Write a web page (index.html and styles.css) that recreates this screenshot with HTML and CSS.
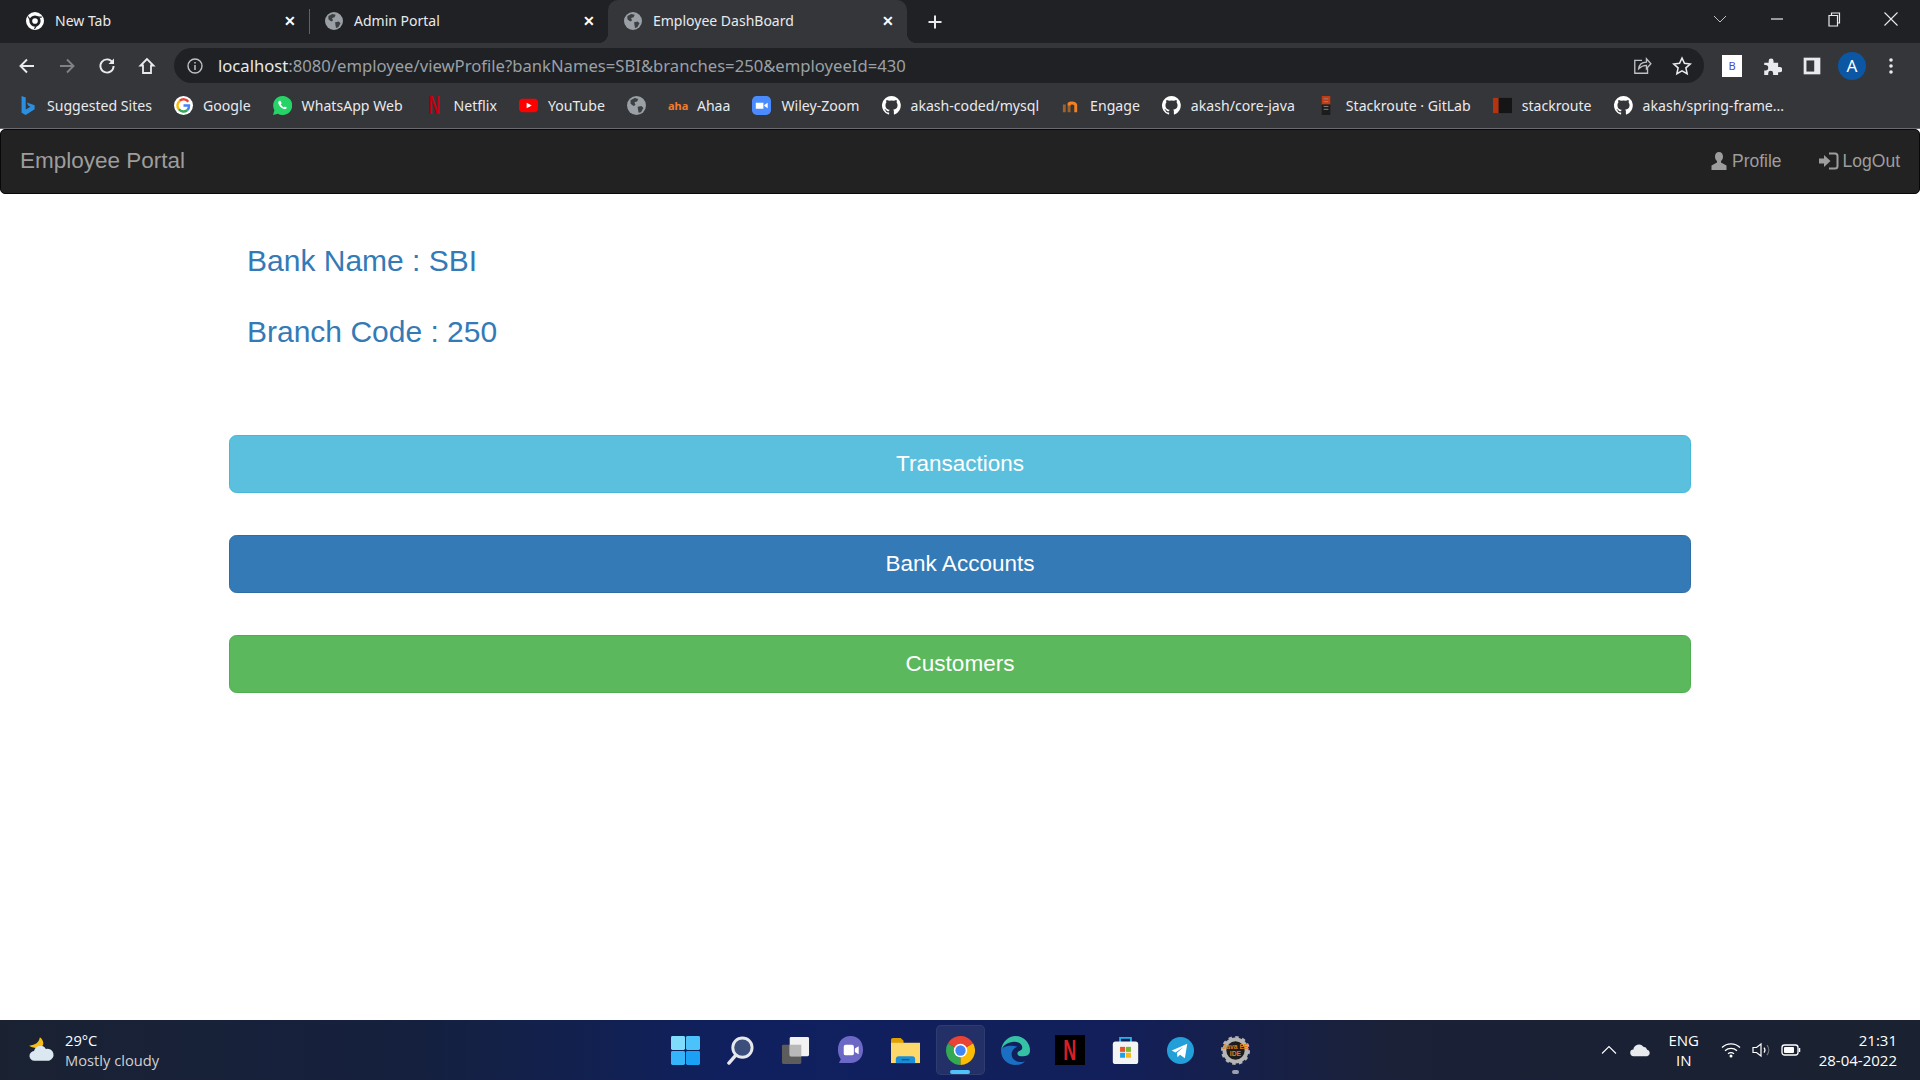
FILE: index.html
```html
<!DOCTYPE html>
<html lang="en">
<head>
    <meta charset="UTF-8">
    <meta name="viewport" content="width=device-width, initial-scale=1.0">
    <title>Employee DashBoard</title>
    <link rel="stylesheet" href="styles.css">
</head>
<body>
    <svg class="defs" width="0" height="0">
        <symbol id="globe" viewBox="0 0 16 16">
            <circle cx="8" cy="8" r="8" fill="#9aa0a6"/>
            <path d="M3 3.500l3.500-1.800 3 .8-1 2.200-2.200.6.8 2.200-1.600 1L3 6.500zM9 9l3.200-.6 1.600 1.600-2 3.600-2 .6-.6-3z" fill="#3c4043"/>
        </symbol>
        <symbol id="github" viewBox="0 0 16 16">
            <path fill="#fff" d="M8 0a8 8 0 0 0-2.500 15.600c.4.1.5-.2.5-.4v-1.400c-2.200.5-2.700-1-2.700-1-.4-.9-.9-1.200-.9-1.200-.7-.5.1-.5.1-.5.8.1 1.200.8 1.200.8.7 1.200 1.900.9 2.300.7.1-.5.300-.9.500-1.100-1.800-.2-3.600-.9-3.600-4 0-.9.300-1.600.8-2.100-.1-.2-.4-1 .1-2.100 0 0 .7-.2 2.200.8a7.600 7.600 0 0 1 4 0c1.500-1 2.200-.8 2.200-.8.4 1.100.2 1.900.1 2.100.5.600.8 1.300.8 2.100 0 3.100-1.900 3.700-3.700 3.900.3.300.6.800.6 1.500v2.200c0 .2.100.5.600.4A8 8 0 0 0 8 0z"/>
        </symbol>
    </svg>

    <div class="tabstrip">
        <div class="tab">
            <svg class="favicon" viewBox="0 0 16 16"><circle cx="8" cy="8" r="6.500" fill="none" stroke="#fff" stroke-width="3"/><circle cx="8" cy="8" r="2.500" fill="#fff"/><path d="M8 4.500h6M5 9.500L2 4M10.500 10l-3 5" stroke="#202124" stroke-width="1"/></svg>
            <span class="tab-title">New Tab</span>
            <span class="tab-close">&#10005;</span>
        </div>
        <div class="tab tab-sep">
            <svg class="favicon"><use href="#globe"/></svg>
            <span class="tab-title">Admin Portal</span>
            <span class="tab-close">&#10005;</span>
        </div>
        <div class="tab tab-active">
            <svg class="favicon"><use href="#globe"/></svg>
            <span class="tab-title">Employee DashBoard</span>
            <span class="tab-close">&#10005;</span>
        </div>
        <svg class="new-tab" viewBox="0 0 16 16"><path d="M8 1.500v13M1.500 8h13" stroke="#e8eaed" stroke-width="2"/></svg>
        <div class="window-controls">
            <svg class="win-btn" viewBox="0 0 16 16"><path d="M2 5l6 6 6-6" fill="none" stroke="#bdc1c6" stroke-width="1"/></svg>
            <svg class="win-btn" viewBox="0 0 16 16"><path d="M2 8h12" stroke="#e8eaed" stroke-width="1.200"/></svg>
            <svg class="win-btn" viewBox="0 0 16 16"><path d="M3 4.500h8.500V15H3zM5.500 4.500V2h8v10h-2" fill="none" stroke="#e8eaed" stroke-width="1.200"/></svg>
            <svg class="win-btn" viewBox="0 0 16 16"><path d="M1.500 1.500l13 13M14.500 1.500l-13 13" stroke="#e8eaed" stroke-width="1.100"/></svg>
        </div>
    </div>

    <div class="toolbar">
        <svg class="tool-btn" viewBox="0 0 18 18"><path d="M16 9H3M9 2.500L2.500 9 9 15.500" fill="none" stroke="#e8eaed" stroke-width="1.900"/></svg>
        <svg class="tool-btn" viewBox="0 0 18 18"><path d="M2 9h13M9 2.500L15.500 9 9 15.500" fill="none" stroke="#7f8286" stroke-width="1.900"/></svg>
        <svg class="tool-btn" viewBox="0 0 18 18"><path d="M14.600 5.500A6.600 6.600 0 1 0 15.600 9" fill="none" stroke="#e8eaed" stroke-width="1.900"/><path d="M16 1.500v5.500h-5.500z" fill="#e8eaed"/></svg>
        <svg class="tool-btn" viewBox="0 0 18 18"><path d="M9 2L2.500 8.500H5V16h8V8.500h2.500z" fill="none" stroke="#e8eaed" stroke-width="1.800"/></svg>
        <div class="omnibox">
            <svg class="omni-info" viewBox="0 0 16 16"><circle cx="8" cy="8" r="7" fill="none" stroke="#bdc1c6" stroke-width="1.400"/><path d="M8 7v5M8 4v1.600" stroke="#bdc1c6" stroke-width="1.500"/></svg>
            <span class="url"><span class="url-host">localhost</span>:8080/employee/viewProfile?bankNames=SBI&amp;branches=250&amp;employeeId=430</span>
            <svg class="omni-icon" viewBox="0 0 18 18"><path d="M9 4H2.500v11.500h11.500V11M6 11.500c.5-4 3-6 7-6V2.500l4 4.500-4 4.500V8.500c-3 0-5 1-7 3z" fill="none" stroke="#bdc1c6" stroke-width="1.200"/></svg>
            <svg class="omni-icon" viewBox="0 0 18 18"><path d="M9 1.800l2.200 4.800 5.200.6-3.900 3.500 1.100 5.200L9 13.300l-4.600 2.600 1.100-5.200L1.600 7.200l5.200-.6z" fill="none" stroke="#e8eaed" stroke-width="1.400"/></svg>
        </div>
        <div class="ext-icons">
            <span class="ext-b">B</span>
            <svg class="ext-icon" viewBox="0 0 18 18"><path d="M2 6h4V4.500a2.200 2.200 0 0 1 4.400 0V6h4.100v4H16a2.300 2.300 0 0 1 0 4.600h-1.500V17H10v-1.500a2.200 2.200 0 0 0-4.400 0V17H2v-4h1.200a2.400 2.400 0 0 0 0-4.800H2z" fill="#e8eaed"/></svg>
            <svg class="ext-icon" viewBox="0 0 18 18"><path d="M1.500 1.500h15v15h-15z" fill="#e8eaed"/><path d="M4 4h7v10H4z" fill="#35363a"/></svg>
            <span class="avatar">A</span>
            <svg class="ext-menu" viewBox="0 0 6 18"><circle cx="3" cy="3" r="1.800" fill="#e8eaed"/><circle cx="3" cy="9" r="1.800" fill="#e8eaed"/><circle cx="3" cy="15" r="1.800" fill="#e8eaed"/></svg>
        </div>
    </div>

    <div class="bookmarks">
        <a class="bookmark"><svg class="bm-icon" viewBox="0 0 16 16"><path d="M3 0l3.500 1.300v10l4-2.300-2-1-1-2.500 6.500 2.300v3.400L6.500 16 3 14z" fill="#2a8fe0"/></svg>Suggested Sites</a>
        <a class="bookmark"><svg class="bm-icon" viewBox="0 0 20 20"><circle cx="10" cy="10" r="10" fill="#fff"/><path d="M15 6a6 6 0 0 0-9-.8" fill="none" stroke="#ea4335" stroke-width="2.600"/><path d="M6 5.200A6 6 0 0 0 5.200 14" fill="none" stroke="#fbbc05" stroke-width="2.600"/><path d="M5.200 14a6 6 0 0 0 8.600 1" fill="none" stroke="#34a853" stroke-width="2.600"/><path d="M13.800 15a6 6 0 0 0 2-5H10" fill="none" stroke="#4285f4" stroke-width="2.600"/></svg>Google</a>
        <a class="bookmark"><svg class="bm-icon" viewBox="0 0 20 20"><path d="M10 0a10 10 0 0 0-8.500 15L0 20l5.200-1.400A10 10 0 1 0 10 0z" fill="#25d366"/><path d="M6.500 5c-1 .8-1.200 2.200-.5 3.800 1.200 2.600 3 4.200 5.500 5 1.500.4 2.700-.2 3.200-1.400l-2.200-1.400-1.200 1C10 11.500 8.800 10.200 8.200 8.800l1-1.100L7.800 5z" fill="#fff"/></svg>WhatsApp Web</a>
        <a class="bookmark"><span class="bm-netflix"><span class="narrow-n">N</span></span>Netflix</a>
        <a class="bookmark"><svg class="bm-icon" viewBox="0 0 20 20"><rect y="3" width="20" height="14" rx="4" fill="#f00"/><path d="M8 7l5.500 3L8 13z" fill="#fff"/></svg>YouTube</a>
        <a class="bookmark bookmark-bare"><svg class="bm-icon"><use href="#globe"/></svg></a>
        <a class="bookmark"><span class="bm-aha">aha</span>Ahaa</a>
        <a class="bookmark"><svg class="bm-icon" viewBox="0 0 20 20"><rect width="20" height="20" rx="5" fill="#4a8cff"/><path d="M4 7h8v6.500H4zM13 9.500l3.500-2.500v6L13 10.500z" fill="#fff"/></svg>Wiley-Zoom</a>
        <a class="bookmark"><svg class="bm-icon"><use href="#github"/></svg>akash-coded/mysql</a>
        <a class="bookmark"><svg class="bm-icon" viewBox="0 0 20 20"><path d="M2 9h3v8H2zM7 9h3v8H7z" fill="#a0622a"/><path d="M7 7c3-2 9-2 10 2v8h-3V10c-1-1.500-4-1-4 0H7z" fill="#f48120"/></svg>Engage</a>
        <a class="bookmark"><svg class="bm-icon"><use href="#github"/></svg>akash/core-java</a>
        <a class="bookmark"><svg class="bm-icon" viewBox="0 0 20 20"><path d="M5 0h9v9H5z" fill="#c23b12"/><path d="M5 9h9v11H5z" fill="#1c1c1c"/><path d="M7 3h5M7 6h5M7 11h5M7 14h5" stroke="#8a8a8a" stroke-width="1"/></svg>Stackroute · GitLab</a>
        <a class="bookmark"><svg class="bm-icon" viewBox="0 0 20 20"><path d="M0 2h6v16H0z" fill="#b5330f"/><path d="M6 2h14v16H6z" fill="#151515"/></svg>stackroute</a>
        <a class="bookmark"><svg class="bm-icon"><use href="#github"/></svg>akash/spring-frame...</a>
    </div>

    <nav class="navbar">
        <a class="navbar-brand">Employee Portal</a>
        <div class="navbar-right">
            <a class="nav-link">
                <svg class="nav-icon" viewBox="0 0 18 18"><path d="M9 0c2.500 0 4 2 4 4.500 0 2-.8 3.500-2 4.500v1.500l5.500 3V18h-15v-4.500l5.500-3V9C5.800 8 5 6.500 5 4.500 5 2 6.500 0 9 0z" fill="#9d9d9d"/></svg>Profile</a>
            <a class="nav-link">
                <svg class="nav-icon nav-icon-wide" viewBox="0 0 20 18"><path d="M0 6.500h5V3l6.500 6L5 15v-3.500H0z" fill="#9d9d9d"/><path d="M10 1.500h6a2.500 2.500 0 0 1 2.500 2.500v10a2.500 2.500 0 0 1-2.500 2.500h-6" fill="none" stroke="#9d9d9d" stroke-width="2"/></svg>LogOut</a>
        </div>
    </nav>

    <main class="container">
        <h3 class="info-line">Bank Name : SBI</h3>
        <h3 class="info-line">Branch Code : 250</h3>
        <div class="actions">
            <a class="btn btn-info">Transactions</a>
            <a class="btn btn-primary">Bank Accounts</a>
            <a class="btn btn-success">Customers</a>
        </div>
    </main>

    <footer class="taskbar">
        <div class="weather">
            <svg class="weather-icon" viewBox="0 0 28 28"><path d="M13 2c-1 5-4 7-10 8 3 2 7 3 11 1 3-1 3-6-1-9z" fill="#f6bd16"/><path d="M8 24a4.500 4.500 0 0 1-.5-9 6 6 0 0 1 11-2 5.500 5.500 0 0 1 3 11z" fill="#dbe8f2"/></svg>
            <div class="weather-text">
                <span class="weather-temp">29°C</span>
                <span class="weather-desc">Mostly cloudy</span>
            </div>
        </div>
        <div class="task-icons">
            <div class="task-item">
                <svg class="task-icon" viewBox="0 0 30 30"><rect x="0" y="0" width="14.500" height="14.500" rx="1.500" fill="#7fdcfb"/><rect x="15.500" y="0" width="14.500" height="14.500" rx="1.500" fill="#4cc2fa"/><rect x="0" y="15.500" width="14.500" height="14.500" rx="1.500" fill="#35b4f9"/><rect x="15.500" y="15.500" width="14.500" height="14.500" rx="1.500" fill="#1aa0f5"/></svg>
            </div>
            <div class="task-item">
                <svg class="task-icon" viewBox="0 0 30 30"><circle cx="17" cy="12" r="10" fill="#3c4f7c" stroke="#e6e8ec" stroke-width="3"/><path d="M10 20l-7 8" stroke="#e6e8ec" stroke-width="3.500" stroke-linecap="round"/></svg>
            </div>
            <div class="task-item">
                <svg class="task-icon" viewBox="0 0 30 30"><rect x="1" y="9" width="20" height="20" rx="1.500" fill="#5c5c5c"/><rect x="9" y="1" width="20" height="20" rx="1.500" fill="#f2f2f2"/><rect x="9" y="9" width="12" height="12" fill="#b8b8b8"/></svg>
            </div>
            <div class="task-item">
                <svg class="task-icon" viewBox="0 0 30 30"><path d="M15 0c8 0 13 6 13 14s-5 14-13 14H3l2-4C3 21 2 18 2 14 2 6 7 0 15 0z" fill="#6b68c6"/><rect x="8" y="9" width="10.500" height="11" rx="2" fill="#fff"/><path d="M19.500 13l4-2.500v8.500l-4-2.500z" fill="#fff"/></svg>
            </div>
            <div class="task-item">
                <svg class="task-icon" viewBox="0 0 30 30"><path d="M0 4a2 2 0 0 1 2-2h8l3 3v4H0z" fill="#e0a100"/><path d="M0 7h30v21H0z" fill="#fcd96a"/><path d="M5 24a3 3 0 0 1 3-3h14a3 3 0 0 1 3 3v4H5z" fill="#1a8fd8"/><path d="M11 24.500h8" stroke="#0c5c96" stroke-width="1.500"/></svg>
            </div>
            <div class="task-item task-item-active">
                <svg class="task-icon" viewBox="0 0 28 28"><circle cx="14" cy="14" r="9.500" fill="none" stroke="#34a853" stroke-width="9" pathLength="3" stroke-dasharray="1 2" transform="rotate(90 14 14)"/><circle cx="14" cy="14" r="9.500" fill="none" stroke="#fbbc05" stroke-width="9" pathLength="3" stroke-dasharray="1 2" transform="rotate(330 14 14)"/><circle cx="14" cy="14" r="9.500" fill="none" stroke="#ea4335" stroke-width="9" pathLength="3" stroke-dasharray="1 2" transform="rotate(210 14 14)"/><circle cx="14" cy="14" r="6.500" fill="#fff"/><circle cx="14" cy="14" r="5" fill="#4285f4"/></svg>
            </div>
            <div class="task-item">
                <svg class="task-icon" viewBox="0 0 30 30"><path d="M15 0a15 15 0 0 1 15 15c0 5-4 6-8 6-3 0-5-1-5-3 0-3 5-2 5-6 0-4-4-6-8-6-7 0-12 4-14 9C1 6 8 0 15 0z" fill="#35c1a5"/><path d="M0 15c0 9 7 15 15 15 4 0 7-1 10-4-9 3-14-2-14-7 0-4 3-7 6-8-7-2-17 0-17 4z" fill="#1a6fc2"/></svg>
            </div>
            <div class="task-item">
                <span class="task-netflix"><span class="narrow-n">N</span></span>
            </div>
            <div class="task-item">
                <svg class="task-icon" viewBox="0 0 30 32"><path d="M9 7V2h12v5" fill="none" stroke="#22b4ea" stroke-width="2"/><rect x="1" y="6" width="28" height="25" rx="3" fill="#f4f4f4"/><rect x="9" y="12" width="5.500" height="5.500" fill="#e8552b"/><rect x="15.500" y="12" width="5.500" height="5.500" fill="#7cb82f"/><rect x="9" y="18.500" width="5.500" height="5.500" fill="#1ea0e8"/><rect x="15.500" y="18.500" width="5.500" height="5.500" fill="#f7b916"/></svg>
            </div>
            <div class="task-item">
                <svg class="task-icon" viewBox="0 0 30 30"><circle cx="15" cy="15" r="14" fill="#229ed9"/><path d="M6 15l16-7-2.500 15-5-3.500-2.500 2.500-.8-4.500 7-6-8.500 5.500z" fill="#fff"/></svg>
            </div>
            <div class="task-item task-item-open">
                <svg class="task-icon" viewBox="0 0 30 30"><circle cx="15" cy="15" r="11.500" fill="#1c1c1c" stroke="#b5b5b5" stroke-width="4"/><circle cx="15" cy="15" r="13.500" fill="none" stroke="#b5b5b5" stroke-width="3" stroke-dasharray="3.500 3.500"/><text x="15" y="13" class="ee-text">Java EE</text><text x="15" y="21" class="ee-text">IDE</text></svg>
            </div>
        </div>
        <div class="tray">
            <svg class="tray-chevron" viewBox="0 0 16 10"><path d="M1 8.500l7-7 7 7" fill="none" stroke="#fff" stroke-width="1.100"/></svg>
            <svg class="tray-cloud" viewBox="0 0 22 14"><path d="M4 13.500a3.500 3.500 0 0 1-.5-7A6 6 0 0 1 14 3.500a4.500 4.500 0 0 1 4 3.200 3.500 3.500 0 0 1 0 6.800z" fill="#e8eaed"/></svg>
            <div class="tray-lang"><span>ENG</span><span>IN</span></div>
            <svg class="tray-icon tray-wifi" viewBox="0 0 20 16"><path d="M1 5.500a13 13 0 0 1 18 0M4 8.700a9 9 0 0 1 12 0M7 11.700a5 5 0 0 1 6 0" fill="none" stroke="#fff" stroke-width="1.300"/><circle cx="10" cy="14" r="1.500" fill="#fff"/></svg>
            <svg class="tray-icon" viewBox="0 0 20 16"><path d="M1 5.500h3.500L9 2v12l-4.500-3.500H1z" fill="none" stroke="#fff" stroke-width="1.200"/><path d="M12 5.500a4 4 0 0 1 0 5" fill="none" stroke="#fff" stroke-width="1.200"/><path d="M15 3a8 8 0 0 1 0 10" fill="none" stroke="#777" stroke-width="1.200"/></svg>
            <svg class="tray-icon" viewBox="0 0 20 16"><rect x="1" y="3" width="16" height="10" rx="2.500" fill="none" stroke="#fff" stroke-width="1.300"/><rect x="3" y="5" width="10" height="6" rx="1" fill="#fff"/><path d="M18.500 6v4" stroke="#fff" stroke-width="1.500"/></svg>
            <div class="tray-clock"><span>21:31</span><span>28-04-2022</span></div>
        </div>
    </footer>
</body>
</html>
```

FILE: styles.css
```css
* {
    box-sizing: border-box;
}
html, body {
    height: 100%;
}
body {
    margin: 0;
    height: 100vh;
    display: flex;
    flex-direction: column;
    overflow: hidden;
    background-color: #fff;
    font-family: "Liberation Sans", Arial, sans-serif;
}
.defs {
    position: absolute;
}

/* browser chrome */
.tabstrip {
    height: 43px;
    flex: none;
    display: flex;
    align-items: center;
    padding-left: 10px;
    background-color: #202124;
    font-family: "Noto Sans", sans-serif;
}
.tab {
    position: relative;
    width: 299px;
    height: 100%;
    padding: 0 13px 2px 16px;
    display: flex;
    align-items: center;
    color: #e8eaed;
    font-size: 14px;
}
.tab-sep::before {
    content: "";
    position: absolute;
    left: 0;
    top: 9px;
    bottom: 9px;
    width: 1px;
    background-color: #5f6368;
}
.tab-active {
    background-color: #35363a;
    border-radius: 10px 10px 0 0;
}
.tab-active::before,
.tab-active::after {
    content: "";
    position: absolute;
    bottom: 0;
    width: 10px;
    height: 10px;
}
.tab-active::before {
    left: -10px;
    background: radial-gradient(circle at 0 0, transparent 10px, #35363a 10.500px);
}
.tab-active::after {
    right: -10px;
    background: radial-gradient(circle at 100% 0, transparent 10px, #35363a 10.500px);
}
.favicon {
    width: 18px;
    height: 18px;
    flex: none;
}
.tab-title {
    flex: 1;
    margin-left: 11px;
}
.tab-close {
    font-size: 14px;
    font-weight: bold;
    color: #fff;
}
.new-tab {
    width: 16px;
    height: 16px;
    margin-left: 20px;
}
.window-controls {
    margin-left: auto;
    display: flex;
    align-items: center;
    gap: 41px;
    padding-right: 21px;
    height: 100%;
    padding-bottom: 6px;
}
.win-btn {
    width: 16px;
    height: 16px;
}
.toolbar {
    height: 41px;
    flex: none;
    display: flex;
    align-items: center;
    padding: 4px 0 0 18px;
    background-color: #35363a;
    font-family: "Noto Sans", sans-serif;
}
.tool-btn {
    width: 18px;
    height: 18px;
    margin-right: 22px;
}
.omnibox {
    width: 1530px;
    height: 35px;
    margin-left: -4px;
    padding: 0 12px 0 13px;
    display: flex;
    align-items: center;
    background-color: #202124;
    border-radius: 18px;
}
.omni-info {
    width: 16px;
    height: 16px;
    flex: none;
}
.url {
    flex: 1;
    margin-left: 15px;
    font-size: 16.650px;
    color: #9aa0a6;
    white-space: nowrap;
}
.url-host {
    color: #e8eaed;
}
.omni-icon {
    width: 20px;
    height: 20px;
    margin-left: 20px;
}
.ext-icons {
    flex: 1;
    display: flex;
    align-items: center;
    padding-left: 18px;
    gap: 20px;
}
.ext-b {
    width: 20px;
    height: 22px;
    display: flex;
    align-items: center;
    justify-content: center;
    background-color: #fff;
    color: #4a4ac8;
    font-size: 11px;
}
.ext-icon {
    width: 20px;
    height: 20px;
}
.avatar {
    width: 28px;
    height: 28px;
    margin-left: -4px;
    display: flex;
    align-items: center;
    justify-content: center;
    border-radius: 50%;
    background-color: #0b57a4;
    color: #fff;
    font-size: 17px;
}
.ext-menu {
    width: 6px;
    height: 18px;
    margin-left: 2px;
}
.bookmarks {
    height: 45px;
    flex: none;
    display: flex;
    align-items: center;
    padding: 0 0 2px 18px;
    gap: 22px;
    background-color: #35363a;
    border-bottom: 1px solid #6a6b6e;
    color: #e8eaed;
    font-family: "Noto Sans", sans-serif;
    font-size: 14.100px;
}
.bookmark {
    display: flex;
    align-items: center;
    gap: 10px;
    white-space: nowrap;
}
.bookmark-bare {
    gap: 0;
}
.bm-icon {
    width: 19px;
    height: 19px;
    flex: none;
}
.bm-netflix {
    width: 19px;
    color: #c4000f;
    font-family: "Liberation Sans", sans-serif;
    font-size: 26px;
    font-weight: bold;
    line-height: 20px;
    text-align: center;
}
.narrow-n {
    display: inline-block;
    transform: scaleX(0.6);
}
.bm-aha {
    width: 19px;
    color: #f07d2c;
    font-size: 11px;
    font-weight: bold;
    text-align: center;
}

/* navbar */
.navbar {
    height: 65px;
    flex: none;
    display: flex;
    align-items: center;
    justify-content: space-between;
    padding: 0 19px 1px 19px;
    background-color: #222;
    border: 1px solid #080808;
    border-radius: 5px;
    color: #9d9d9d;
}
.navbar-brand {
    font-size: 22.500px;
}
.navbar-right {
    display: flex;
    align-items: center;
    gap: 37px;
    font-size: 17.500px;
}
.nav-link {
    display: flex;
    align-items: center;
    gap: 4px;
}
.nav-icon {
    width: 18px;
    height: 18px;
}
.nav-icon-wide {
    width: 20px;
}

/* page content */
.container {
    flex: 1;
    width: 1462px;
    margin: 0 auto;
    padding-top: 50px;
}
.info-line {
    margin: 0 0 38px;
    padding-left: 18px;
    color: #337ab7;
    font-size: 30px;
    font-weight: 500;
    line-height: 33px;
}
.actions {
    margin-top: 87px;
    display: flex;
    flex-direction: column;
    gap: 42px;
}
.btn {
    height: 58px;
    padding-bottom: 1px;
    display: flex;
    align-items: center;
    justify-content: center;
    border: 1px solid transparent;
    border-radius: 7.500px;
    color: #fff;
    font-size: 22.500px;
}
.btn-info {
    background-color: #5bc0de;
    border-color: #46b8da;
}
.btn-primary {
    background-color: #337ab7;
    border-color: #2e6da4;
}
.btn-success {
    background-color: #5cb85c;
    border-color: #4cae4c;
}

/* windows taskbar */
.taskbar {
    position: relative;
    height: 60px;
    flex: none;
    display: flex;
    align-items: center;
    justify-content: space-between;
    background: linear-gradient(90deg, #1a2232 0%, #15203f 22%, #10205f 38%, #121f5a 58%, #1a2138 72%, #1a2130 100%);
    color: #fff;
    font-family: "Open Sans", sans-serif;
}
.weather {
    width: 300px;
    display: flex;
    align-items: center;
    gap: 9px;
    padding-left: 26px;
}
.weather-icon {
    width: 30px;
    height: 30px;
}
.weather-text {
    display: flex;
    flex-direction: column;
    font-size: 14.700px;
    line-height: 20px;
}
.weather-desc {
    color: #d0d0d0;
}
.task-icons {
    position: absolute;
    left: 0;
    right: 0;
    top: 0;
    bottom: 0;
    display: flex;
    align-items: center;
    justify-content: center;
}
.task-item {
    position: relative;
    width: 55px;
    height: 50px;
    display: flex;
    align-items: center;
    justify-content: center;
}
.task-item-active::before {
    content: "";
    position: absolute;
    left: 3px;
    right: 3px;
    top: 0;
    bottom: 0;
    background-color: rgba(255, 255, 255, 0.08);
    border: 1px solid rgba(255, 255, 255, 0.06);
    border-radius: 5px;
}
.task-item-active::after {
    content: "";
    position: absolute;
    left: 17px;
    bottom: 1px;
    width: 20px;
    height: 4px;
    background-color: #4fc3f7;
    border-radius: 2px;
}
.task-item-open::after {
    content: "";
    position: absolute;
    left: 24px;
    bottom: 1px;
    width: 7px;
    height: 4px;
    background-color: #9aa0b0;
    border-radius: 2px;
}
.task-icon {
    position: relative;
    width: 29px;
    height: 29px;
}
.task-netflix {
    width: 30px;
    height: 30px;
    background-color: #000;
    color: #d81f26;
    font-family: "Liberation Sans", sans-serif;
    font-size: 30px;
    font-weight: bold;
    line-height: 30px;
    text-align: center;
}
.ee-text {
    fill: #e87a1a;
    font-family: "Liberation Sans", sans-serif;
    font-size: 7px;
    font-weight: bold;
    text-anchor: middle;
}
.tray {
    position: relative;
    display: flex;
    align-items: center;
    padding-right: 23px;
}
.tray-chevron {
    width: 16px;
    height: 10px;
}
.tray-cloud {
    width: 21px;
    height: 14px;
    margin-left: 13px;
}
.tray-lang {
    width: 32px;
    margin: 0 21px 0 17px;
    display: flex;
    flex-direction: column;
    align-items: center;
    font-size: 15px;
    line-height: 20px;
}
.tray-icon {
    width: 20px;
    height: 16px;
    margin-right: 9px;
}
.tray-wifi {
    margin-right: 11px;
}
.tray-clock {
    margin-left: 9px;
    display: flex;
    flex-direction: column;
    align-items: flex-end;
    font-size: 15px;
    line-height: 20px;
}
```
